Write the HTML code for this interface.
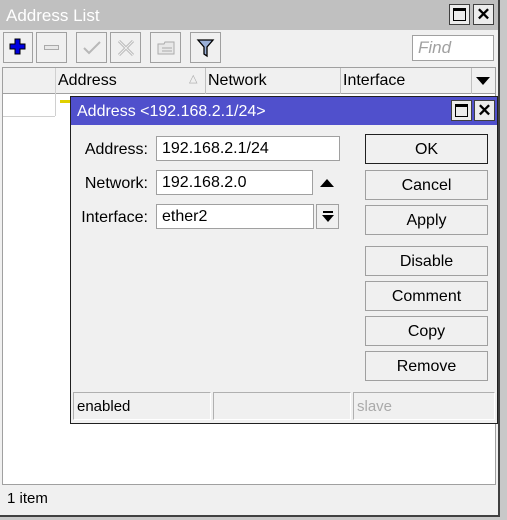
<!DOCTYPE html>
<html><head><style>
*{box-sizing:border-box;margin:0;padding:0}
body{width:507px;height:520px;background:#f0f0f0;position:relative;overflow:hidden;font-family:"Liberation Sans",Arial,sans-serif;font-size:15px;color:#000}
.a{position:absolute}
.tb{position:absolute;border:1px solid #a0a0a0;background:#f0f0f0}
.wb{position:absolute;width:21px;height:21px;border:1px solid #404040;background:#ececec}
.field{position:absolute;background:#fff;border:1px solid #a0a0a0;padding-left:5px;line-height:23px;font-size:16px}
.lbl{position:absolute;text-align:right;width:80px;font-size:16px}
.db{position:absolute;left:365px;width:123px;height:30px;border:1px solid #a0a0a0;background:#f0f0f0;text-align:center;line-height:29px;font-size:16px}
</style></head><body>
<div class="a" style="left:0;top:0;width:498px;height:30px;background:#c0c0c0"></div>
<div class="a" style="left:6px;top:6px;color:#fff;font-size:17px">Address List</div>
<div class="wb" style="left:449px;top:4px"><div class="a" style="left:3px;top:3px;width:13px;height:13px;border:1.5px solid #000;border-top-width:3px"></div></div>
<div class="wb" style="left:473px;top:4px;text-align:center;line-height:19px;font-size:17px;font-weight:bold">✕</div>
<div class="a" style="left:498px;top:0;width:2px;height:520px;background:#404040"></div>
<div class="a" style="left:500px;top:0;width:7px;height:520px;background:#c8c8c8"></div>
<div class="a" style="left:0;top:515px;width:500px;height:2px;background:#404040"></div>
<div class="a" style="left:0;top:517px;width:507px;height:3px;background:#c8c8c8"></div>
<div class="tb" style="left:3px;top:32px;width:30px;height:31px"><svg class="a" style="left:5px;top:5px" width="18" height="18"><path d="M6 1h5v5h5v5h-5v5H6v-5H1V6h5z" fill="#0000e0" stroke="#000" stroke-width="1"/></svg></div>
<div class="tb" style="left:36px;top:32px;width:31px;height:31px"><div class="a" style="left:7px;top:12px;width:15px;height:5px;border:1px solid #aaa;background:#e8e8e8"></div></div>
<div class="tb" style="left:76px;top:32px;width:31px;height:31px"><svg class="a" style="left:5px;top:6px" width="20" height="18"><path d="M2 9l5 5L18 3" fill="none" stroke="#b8b8b8" stroke-width="2"/></svg></div>
<div class="tb" style="left:110px;top:32px;width:31px;height:31px"><svg class="a" style="left:6px;top:6px" width="18" height="18"><path d="M2 2l14 14M16 2L2 16" stroke="#b8b8b8" stroke-width="3"/><path d="M2 2l14 14M16 2L2 16" stroke="#f0f0f0" stroke-width="1"/></svg></div>
<div class="tb" style="left:150px;top:32px;width:31px;height:31px"><svg class="a" style="left:6px;top:7px" width="20" height="16"><path d="M1 4h6l1-2h9v12H1z" fill="#e8e8e8" stroke="#aaa"/><path d="M5 8h10M5 11h10" stroke="#aaa"/></svg></div>
<div class="tb" style="left:190px;top:32px;width:31px;height:31px"><svg class="a" style="left:5px;top:5px" width="20" height="20"><path d="M2 2h15l-6 7v9l-3-2V9z" fill="#9ab0d8" stroke="#000" stroke-width="1.3"/></svg></div>
<div class="a" style="left:412px;top:35px;width:82px;height:26px;background:#fff;border:1px solid #a0a0a0;color:#a0a0a0;font-style:italic;font-size:17px;padding:2px 5px">Find</div>
<div class="a" style="left:2px;top:67px;width:494px;height:418px;background:#fff;border:1px solid #a0a0a0"></div>
<div class="a" style="left:3px;top:68px;width:492px;height:26px;background:#f0f0f0;border-bottom:1px solid #a0a0a0"></div>
<div class="a" style="left:55px;top:68px;width:1px;height:48px;background:#d0d0d0"></div>
<div class="a" style="left:3px;top:116px;width:52px;height:1px;background:#d0d0d0"></div>
<div class="a" style="left:205px;top:68px;width:1px;height:26px;background:#c0c0c0"></div>
<div class="a" style="left:340px;top:68px;width:1px;height:26px;background:#c0c0c0"></div>
<div class="a" style="left:471px;top:68px;width:1px;height:26px;background:#c0c0c0"></div>
<div class="a" style="left:58px;top:72px;font-size:16px">Address</div>
<div class="a" style="left:189px;top:72px;color:#aaa;font-size:11px">△</div>
<div class="a" style="left:208px;top:72px;font-size:16px">Network</div>
<div class="a" style="left:343px;top:72px;font-size:16px">Interface</div>
<svg class="a" style="left:476px;top:77px" width="14" height="8"><path d="M0 0h14L7 8z"/></svg>
<div class="a" style="left:60px;top:100px;width:12px;height:3px;background:#e0d000"></div>
<div class="a" style="left:3px;top:485px;width:494px;height:30px;background:#f0f0f0"></div>
<div class="a" style="left:7px;top:490px;font-size:15px">1 item</div>
<div class="a" style="left:70px;top:96px;width:428px;height:328px;background:#f0f0f0;border:1px solid #202020"></div>
<div class="a" style="left:71px;top:97px;width:426px;height:28px;background:#5050cc"></div>
<div class="a" style="left:77px;top:103px;color:#fff;font-size:16px">Address &lt;192.168.2.1/24&gt;</div>
<div class="wb" style="left:451px;top:100px"><div class="a" style="left:3px;top:3px;width:13px;height:13px;border:1.5px solid #000;border-top-width:3px"></div></div>
<div class="wb" style="left:474px;top:100px;text-align:center;line-height:19px;font-size:17px;font-weight:bold">✕</div>
<div class="lbl" style="left:68px;top:141px">Address:</div>
<div class="lbl" style="left:68px;top:175px">Network:</div>
<div class="lbl" style="left:68px;top:209px">Interface:</div>
<div class="field" style="left:156px;top:136px;width:184px;height:25px">192.168.2.1/24</div>
<div class="field" style="left:156px;top:170px;width:157px;height:25px">192.168.2.0</div>
<svg class="a" style="left:320px;top:179px" width="14" height="8"><path d="M7 0L14 8H0z"/></svg>
<div class="field" style="left:156px;top:204px;width:158px;height:25px">ether2</div>
<div class="a" style="left:316px;top:204px;width:23px;height:25px;border:1px solid #a0a0a0;background:#f0f0f0"><svg class="a" style="left:5px;top:6px" width="12" height="12"><path d="M1 1h10" stroke="#000" stroke-width="2"/><path d="M0 4h12L6 11z"/></svg></div>
<div class="db" style="top:134px;border-color:#202020">OK</div>
<div class="db" style="top:170px">Cancel</div>
<div class="db" style="top:205px">Apply</div>
<div class="db" style="top:246px">Disable</div>
<div class="db" style="top:281px">Comment</div>
<div class="db" style="top:316px">Copy</div>
<div class="db" style="top:351px">Remove</div>
<div class="a" style="left:73px;top:392px;width:138px;height:28px;border:1px solid #b0b0b0;border-right-color:#fff;border-bottom-color:#fff;padding:5px 3px;font-size:15px">enabled</div>
<div class="a" style="left:213px;top:392px;width:138px;height:28px;border:1px solid #b0b0b0;border-right-color:#fff;border-bottom-color:#fff"></div>
<div class="a" style="left:353px;top:392px;width:142px;height:28px;border:1px solid #b0b0b0;border-right-color:#fff;border-bottom-color:#fff;padding:5px 3px;color:#aaa;font-size:15px">slave</div>
</body></html>
